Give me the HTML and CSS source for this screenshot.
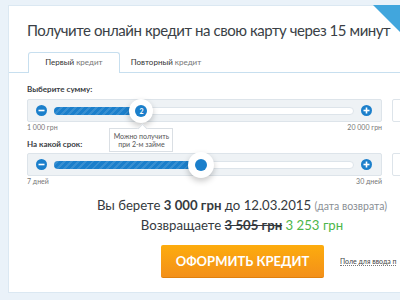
FILE: index.html
```html
<!DOCTYPE html>
<html lang="ru">
<head>
    <meta charset="UTF-8">
    <title>Онлайн кредит</title>
    <link rel="stylesheet" href="styles.css">
</head>
<body>
    <div class="card">
        <div class="corner"></div>
        <h1>Получите онлайн кредит на свою карту через 15 минут</h1>
        <div class="tabs">
            <div class="tab active"><b>Первый</b> кредит</div>
            <div class="tab"><b>Повторный</b> кредит</div>
        </div>
        <div class="form">
            <div class="label">Выберите сумму:</div>
            <div class="slider-row">
                <div class="slider">
                    <svg class="btn" viewBox="0 0 11 11"><circle cx="5.5" cy="5.5" r="5.5" fill="#1b7fcb"/><rect x="2.5" y="4.7" width="6" height="1.6" fill="#fff"/></svg>
                    <div class="track">
                        <div class="fill" style="width: 29%"></div>
                        <div class="handle" style="left: 29%"><span class="knob">2</span></div>
                        <div class="tip" style="left: 29%">Можно получить<br>при 2-м займе</div>
                    </div>
                    <svg class="btn" viewBox="0 0 11 11"><circle cx="5.5" cy="5.5" r="5.5" fill="#1b7fcb"/><rect x="2.5" y="4.7" width="6" height="1.6" fill="#fff"/><rect x="4.7" y="2.5" width="1.6" height="6" fill="#fff"/></svg>
                </div>
                <div class="field"></div>
            </div>
            <div class="scale"><span>1 000 грн</span><span>20 000 грн</span></div>

            <div class="label second">На какой срок:</div>
            <div class="slider-row">
                <div class="slider">
                    <svg class="btn" viewBox="0 0 11 11"><circle cx="5.5" cy="5.5" r="5.5" fill="#1b7fcb"/><rect x="2.5" y="4.7" width="6" height="1.6" fill="#fff"/></svg>
                    <div class="track">
                        <div class="fill" style="width: 49%"></div>
                        <div class="handle big" style="left: 49%"><span class="knob"></span></div>
                    </div>
                    <svg class="btn" viewBox="0 0 11 11"><circle cx="5.5" cy="5.5" r="5.5" fill="#1b7fcb"/><rect x="2.5" y="4.7" width="6" height="1.6" fill="#fff"/><rect x="4.7" y="2.5" width="1.6" height="6" fill="#fff"/></svg>
                </div>
                <div class="field"></div>
            </div>
            <div class="scale"><span>7 дней</span><span>30 дней</span></div>

            <div class="summary">
                <p>Вы берете <b>3 000 грн</b> до 12.03.2015 <span class="muted">(дата возврата)</span></p>
                <p>Возвращаете <b><s>3 505 грн</s></b> <span class="green">3 253 грн</span></p>
            </div>
            <div class="actions">
                <button type="button">ОФОРМИТЬ КРЕДИТ</button>
                <a class="promo" href="#">Поле для ввода п</a>
            </div>
        </div>
    </div>
</body>
</html>
```

FILE: styles.css
```css
* {
    margin: 0;
    padding: 0;
    box-sizing: border-box;
}

body {
    background-color: #eaf2f9;
    font-family: 'Lato', 'Open Sans', sans-serif;
    color: #353a40;
    overflow: hidden;
    height: 300px;
    padding: 5px 0 0 8px;
}

.card {
    position: relative;
    width: 392px;
    height: 288px;
    background-color: #ffffff;
    border: 1px solid #dbe8f2;
    border-right: none;
    padding-top: 14px;
}

.corner {
    position: absolute;
    top: -1px;
    right: 0;
    width: 0;
    height: 0;
    border-top: 27px solid #41a6dd;
    border-left: 27px solid transparent;
}

h1 {
    font-size: 15px;
    font-weight: 400;
    letter-spacing: -0.45px;
    line-height: 20px;
    padding-left: 18px;
    white-space: nowrap;
    color: #3a3f46;
    margin-bottom: 12px;
}

.tabs {
    display: flex;
    height: 21px;
    padding-left: 19px;
    border-bottom: 1px solid #c7dfef;
}

.tab {
    width: 92px;
    height: 21px;
    font-size: 8px;
    line-height: 20px;
    text-align: center;
    color: #777;
}

.tab b {
    font-weight: 400;
    color: #333;
}

.tab.active {
    background-color: #ffffff;
    border: 1px solid #c7dfef;
    border-bottom: none;
    border-radius: 3px 3px 0 0;
    line-height: 19px;
}

.form {
    padding-left: 18px;
}

.label {
    font-size: 8px;
    font-weight: 700;
    line-height: 12px;
    margin-top: 10px;
    margin-bottom: 4px;
    color: #383c42;
}

.label.second {
    margin-top: 6px;
    margin-bottom: 3px;
}

.slider-row {
    display: flex;
    gap: 10px;
    width: 430px;
}

.slider {
    display: flex;
    align-items: center;
    gap: 7px;
    width: 355px;
    height: 23px;
    padding: 0 9px 0 8px;
    background-color: #eef2f5;
    border: 1px solid #dde4ea;
    border-radius: 2px;
}

.btn {
    width: 11px;
    height: 11px;
    flex: none;
}

.track {
    position: relative;
    flex: 1;
    height: 8px;
    background-color: #ffffff;
    border: 1px solid #dde4ea;
    border-radius: 4px;
}

.fill {
    height: 8px;
    margin: -1px 0 0 -1px;
    border-radius: 4px 0 0 4px;
    background-color: #1b7fcb;
    background-image: repeating-linear-gradient(-45deg, rgba(255, 255, 255, 0.12) 0 2px, transparent 2px 5px);
}

.handle {
    position: absolute;
    top: 3px;
    width: 24px;
    height: 24px;
    margin: -12px 0 0 -12px;
    border-radius: 50%;
    background-color: #ffffff;
    box-shadow: 0 3px 6px rgba(0, 0, 0, 0.22);
    display: flex;
    align-items: center;
    justify-content: center;
    z-index: 2;
}

.handle.big {
    width: 26px;
    height: 26px;
    margin: -13px 0 0 -13px;
}

.knob {
    width: 12px;
    height: 12px;
    border-radius: 50%;
    background-color: #1b7fcb;
    color: #ffffff;
    font-size: 7px;
    font-weight: 700;
    line-height: 12px;
    text-align: center;
}

.tip {
    position: absolute;
    top: 20px;
    width: 64px;
    margin-left: -32px;
    padding: 3px 0;
    background-color: #ffffff;
    border: 1px solid #dadfe4;
    font-size: 7px;
    line-height: 8px;
    text-align: center;
    color: #555;
    z-index: 3;
}

.tip::before {
    content: '';
    position: absolute;
    top: -4px;
    left: 29px;
    width: 6px;
    height: 6px;
    background-color: #ffffff;
    border-top: 1px solid #dadfe4;
    border-left: 1px solid #dadfe4;
    transform: rotate(45deg);
}

.field {
    width: 60px;
    height: 23px;
    background-color: #ffffff;
    border: 1px solid #dde4ea;
    border-radius: 2px;
}

.scale {
    display: flex;
    justify-content: space-between;
    width: 355px;
    font-size: 7px;
    line-height: 10px;
    color: #777;
}

.summary {
    width: 300px;
    margin: 10px 0 0 65px;
    text-align: center;
    font-size: 13.2px;
    line-height: 18px;
    color: #353a40;
    white-space: nowrap;
}

.summary p + p {
    margin-top: 1px;
}

.summary b {
    font-weight: 700;
}

.muted {
    font-size: 10.5px;
    color: #8a8f95;
}

.green {
    color: #4db64a;
}

.actions {
    display: flex;
    align-items: center;
    gap: 16px;
    margin: 11px 0 0 134px;
    width: 250px;
}

button {
    flex: none;
    width: 163px;
    height: 33px;
    border: none;
    border-bottom: 1px solid #e0800e;
    border-radius: 2px;
    background: linear-gradient(#fdac0d, #f3901a);
    color: #ffffff;
    font-family: 'Lato', 'Open Sans', sans-serif;
    font-size: 13px;
    font-weight: 700;
    cursor: pointer;
}

.promo {
    font-size: 7px;
    color: #444;
    text-decoration: none;
    border-bottom: 1px dotted #777;
    white-space: nowrap;
}
```
